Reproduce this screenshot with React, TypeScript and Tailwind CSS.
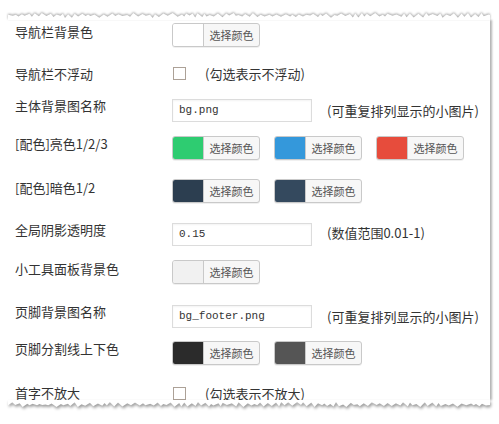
import React from "react";

const cjk = "font-['Noto_Sans_CJK_SC','Noto_Sans',sans-serif]";
const mono = "font-['Liberation_Mono','DejaVu_Sans_Mono',monospace]";

// torn paper edge, points generated from a fixed seed
function tornPath(width: number, height: number, seed: number, top: boolean) {
  let s = seed;
  const rnd = () => {
    s = (s * 9301 + 49297) % 233280;
    return s / 233280;
  };
  const pts: string[] = [];
  let x = 0;
  let up = true;
  while (x <= width) {
    const y = up ? 1 + rnd() * 2 : 3.5 + rnd() * 2.5;
    pts.push(`${x.toFixed(1)},${(top ? y : height - y).toFixed(1)}`);
    x += 2 + rnd() * 3;
    up = !up;
  }
  pts.push(`${width},${top ? 3 : height - 3}`);
  if (top) return `M0,${height} L${pts.join(" L")} L${width},${height} Z`;
  return `M0,0 L${pts.join(" L")} L${width},0 Z`;
}

function TornEdge({ top }: { top: boolean }) {
  return (
    <svg
      width="482"
      height="8"
      className={`block ${top ? "drop-shadow-[0_-1px_1px_rgba(0,0,0,0.35)]" : "drop-shadow-[1px_2px_1.5px_rgba(0,0,0,0.4)]"}`}
    >
      <path d={tornPath(482, 8, top ? 17 : 91, top)} fill="#ffffff" />
    </svg>
  );
}

function ColorPicker({ color }: { color: string }) {
  return (
    <div className="flex h-[24px] w-[88px] overflow-hidden rounded-[3px] border border-[#c9c9c9] bg-[#f7f7f7] shadow-[0_1px_0_rgba(0,0,0,0.06)]">
      <div className="w-[30px] shrink-0" style={{ backgroundColor: color }} />
      <div
        className={`flex flex-1 items-center justify-center border-l border-[#c9c9c9] text-[11px] text-[#555] ${cjk}`}
      >
        选择颜色
      </div>
    </div>
  );
}

function TextBox({ value }: { value: string }) {
  return (
    <div
      className={`flex h-[23px] w-[140px] items-center border border-[#dcdcdc] px-[6px] text-[11px] text-[#333] shadow-[inset_0_1px_2px_rgba(0,0,0,0.05)] ${mono}`}
    >
      {value}
    </div>
  );
}

function Checkbox() {
  return <div className="mt-[2px] h-[13px] w-[13px] border border-[#aca197] bg-white" />;
}

function Hint({ children, ml }: { children: React.ReactNode; ml: string }) {
  return <span className={`${ml} text-[13px] leading-[18px] text-[#333] ${cjk}`}>{children}</span>;
}

type Row = { label: string; h: string; control: React.ReactNode };

const rows: Row[] = [
  { label: "导航栏背景色", h: "h-[42px]", control: <ColorPicker color="#ffffff" /> },
  {
    label: "导航栏不浮动",
    h: "h-[32px]",
    control: (
      <div className="flex items-start pl-[1px]">
        <Checkbox />
        <Hint ml="ml-[19px]">(勾选表示不浮动)</Hint>
      </div>
    ),
  },
  {
    label: "主体背景图名称",
    h: "h-[38px]",
    control: (
      <div className="flex items-start pt-[2px]">
        <TextBox value="bg.png" />
        <Hint ml="ml-[15px] mt-[3px]">(可重复排列显示的小图片)</Hint>
      </div>
    ),
  },
  {
    label: "[配色]亮色1/2/3",
    h: "h-[44px]",
    control: (
      <div className="flex gap-[14px] pt-[1px]">
        <ColorPicker color="#2ecc71" />
        <ColorPicker color="#3498db" />
        <ColorPicker color="#e74c3c" />
      </div>
    ),
  },
  {
    label: "[配色]暗色1/2",
    h: "h-[42px]",
    control: (
      <div className="flex gap-[14px]">
        <ColorPicker color="#2c3e50" />
        <ColorPicker color="#34495e" />
      </div>
    ),
  },
  {
    label: "全局阴影透明度",
    h: "h-[39px]",
    control: (
      <div className="flex items-start pt-[2px]">
        <TextBox value="0.15" />
        <Hint ml="ml-[15px] mt-[1px]">(数值范围0.01-1)</Hint>
      </div>
    ),
  },
  { label: "小工具面板背景色", h: "h-[43px]", control: <ColorPicker color="#f1f1f1" /> },
  {
    label: "页脚背景图名称",
    h: "h-[37px]",
    control: (
      <div className="flex items-start pt-[2px]">
        <TextBox value="bg_footer.png" />
        <Hint ml="ml-[15px] mt-[3px]">(可重复排列显示的小图片)</Hint>
      </div>
    ),
  },
  {
    label: "页脚分割线上下色",
    h: "h-[44px]",
    control: (
      <div className="flex gap-[14px] pt-[1px]">
        <ColorPicker color="#2b2b2b" />
        <ColorPicker color="#555555" />
      </div>
    ),
  },
  {
    label: "首字不放大",
    h: "h-[16px]",
    control: (
      <div className="flex items-start pl-[1px] pt-[1px]">
        <Checkbox />
        <Hint ml="ml-[19px]">(勾选表示不放大)</Hint>
      </div>
    ),
  },
];

export default function App() {
  return (
    <div className="h-[424px] w-[499px] overflow-hidden bg-white pl-[8px] pt-[12px]">
      <div className="w-[482px]">
        <TornEdge top />
        <div className="bg-white pl-[7px] pt-[3px] shadow-[2px_0_2px_rgba(0,0,0,0.3)]">
          {rows.map((r) => (
            <div key={r.label} className={`flex items-start ${r.h}`}>
              <div className={`w-[157px] shrink-0 text-[13px] leading-[18px] text-[#333] ${cjk}`}>
                {r.label}
              </div>
              <div>{r.control}</div>
            </div>
          ))}
        </div>
        <TornEdge top={false} />
      </div>
    </div>
  );
}
